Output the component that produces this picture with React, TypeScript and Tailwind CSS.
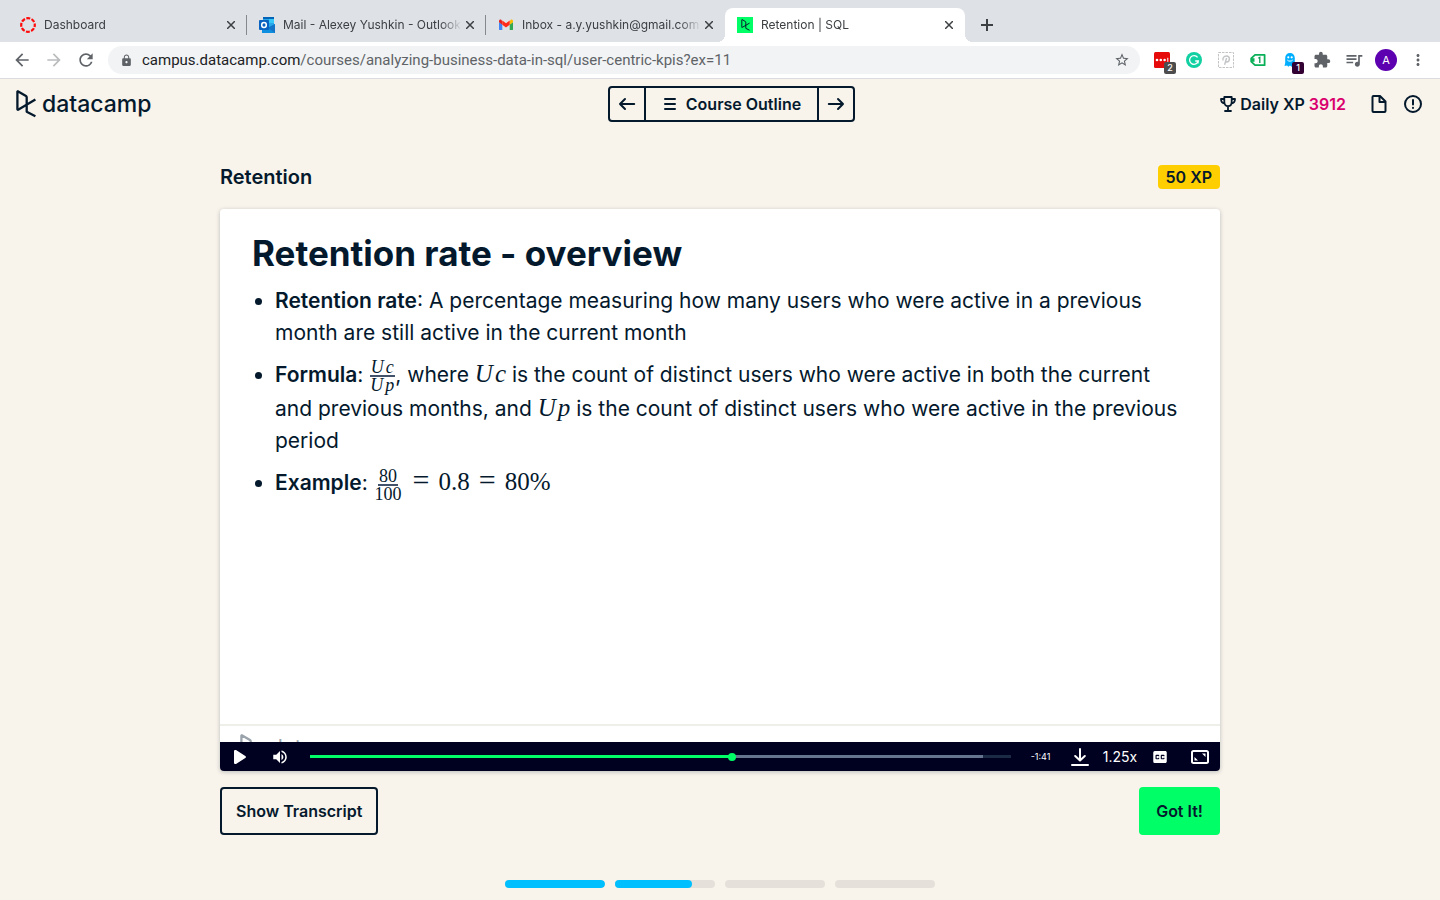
import type { ReactNode } from "react";
import {
  MdArrowBack,
  MdArrowForward,
  MdRefresh,
  MdLock,
  MdStarBorder,
  MdExtension,
  MdQueueMusic,
  MdMoreVert,
  MdVolumeUp,
  MdClosedCaption,
} from "react-icons/md";

function DatacampMark({ className }: { className?: string }) {
  return (
    <svg viewBox="0 0 20 28" className={className} fill="none" stroke="currentColor" strokeWidth="2.3" strokeLinejoin="round" aria-hidden="true">
      <path d="M19.4 26.2 10.700 21.8V7.2a1.4 1.4 0 0 0-.7-1.2L2.2 1.4a.5.5 0 0 0-.8.5v17.3a.5.5 0 0 0 .7.5L19.4 9.6" />
    </svg>
  );
}

function DashboardIcon() {
  return (
    <svg viewBox="0 0 16 16" className="size-4" fill="none" aria-hidden="true">
      <circle cx="8" cy="8" r="6.8" stroke="#ff0a0a" strokeWidth="2.2" strokeDasharray="3.94 1.4" strokeDashoffset="1.9" />
    </svg>
  );
}

function OutlookIcon() {
  return (
    <svg viewBox="0 0 16 16" className="size-4" aria-hidden="true">
      <path d="M4 0h11v11H4z" fill="#28a8ea" />
      <path d="M4 0h11v2H4z" fill="#0364b8" />
      <path d="M10 2h5v4h-5z" fill="#35c8f8" />
      <path d="M3 16V8l7 2 6-3v9z" fill="#0f8fe0" />
      <path d="m9 11 7-4v9z" fill="#1474c8" />
      <rect x="0" y="3" width="10" height="10" rx="1" fill="#0a63c0" />
      <ellipse cx="5" cy="8" rx="2.3" ry="2.5" fill="none" stroke="#fff" strokeWidth="1.5" />
    </svg>
  );
}

function GmailIcon() {
  return (
    <svg viewBox="0 0 16 16" className="size-4" aria-hidden="true">
      <path d="M1 5v7.2c0 .5.4.9.9.9h2.4V7.4z" fill="#4285f4" />
      <path d="M15 5v7.2c0 .5-.4.9-.9.9h-2.4V7.4z" fill="#34a853" />
      <path d="M11.7 4.2v3.6L15 5.3V4.1c0-1.3-1.4-2-2.4-1.2z" fill="#fbbc04" />
      <path d="M4.3 4.2v3.6L1 5.3V4.1c0-1.3 1.4-2 2.4-1.2z" fill="#e5221f" />
      <path d="M4.3 7.8V3.6L8 6.3l3.7-2.7v4.2L8 10.6z" fill="#ff2a1a" />
    </svg>
  );
}

function CampusIcon() {
  return (
    <span className="flex size-4 items-center justify-center bg-[#00ff66] text-[#05192d]">
      <DatacampMark className="h-3 w-[9px]" />
    </span>
  );
}

type TabProps = { icon: ReactNode; title: string; active?: boolean; divider?: boolean };

function BrowserTab({ icon, title, active, divider }: TabProps) {
  return (
    <li className={`relative flex h-full min-w-0 items-center pl-3 pr-2 ${active ? "w-60 rounded-t-lg bg-white" : "w-[239px]"}`}>
      {active && (
        <>
          <span className="absolute bottom-0 -left-2 size-2 bg-[radial-gradient(circle_at_0_0,transparent_8px,white_8px)]" />
          <span className="absolute bottom-0 -right-2 size-2 bg-[radial-gradient(circle_at_100%_0,transparent_8px,white_8px)]" />
        </>
      )}
      <span className="shrink-0">{icon}</span>
      <a href="#" className="ml-2 min-w-0 flex-1 overflow-hidden whitespace-nowrap text-[12px] text-[#3c4043] [mask-image:linear-gradient(to_right,black_88%,transparent)]">
        {title}
      </a>
      <button type="button" aria-label={`Close ${title}`} className="flex size-4 shrink-0 items-center justify-center text-[#3c4043]">
        <svg viewBox="0 0 8 8" className="size-2" stroke="currentColor" strokeWidth="1.5" aria-hidden="true">
          <path d="m0 0 8 8M8 0 0 8" />
        </svg>
      </button>
      {divider && <span className="absolute right-0 top-[7px] h-5 w-px bg-[#85888d]" />}
    </li>
  );
}

function TabStrip() {
  return (
    <nav aria-label="Tabs" className="flex h-[42px] items-stretch bg-[#dee1e6] pl-2 pt-2">
      <ul className="flex min-w-0 items-stretch">
        <BrowserTab icon={<DashboardIcon />} title="Dashboard" divider />
        <BrowserTab icon={<OutlookIcon />} title="Mail - Alexey Yushkin - Outlook" divider />
        <BrowserTab icon={<GmailIcon />} title="Inbox - a.y.yushkin@gmail.com" />
        <BrowserTab icon={<CampusIcon />} title="Retention | SQL" active />
      </ul>
      <button type="button" aria-label="New tab" className="ml-2 flex w-7 items-center justify-center text-[#3c4043]">
        <svg viewBox="0 0 12 12" className="size-3" stroke="currentColor" strokeWidth="2" aria-hidden="true">
          <path d="M6 0v12M0 6h12" />
        </svg>
      </button>
    </nav>
  );
}

function ToolButton({ label, children }: { label: string; children: ReactNode }) {
  return (
    <button type="button" aria-label={label} className="relative flex size-8 shrink-0 items-center justify-center text-[#5f6368]">
      {children}
    </button>
  );
}

function Toolbar() {
  return (
    <div className="flex h-[37px] items-center border-b border-[#dadce0] bg-white px-[6px]">
      <ToolButton label="Back"><MdArrowBack className="size-5" /></ToolButton>
      <ToolButton label="Forward"><MdArrowForward className="size-5 text-[#babcbe]" /></ToolButton>
      <ToolButton label="Reload"><MdRefresh className="size-5" /></ToolButton>
      <div className="ml-[6px] flex h-7 min-w-0 flex-1 items-center rounded-full bg-[#f1f3f4] pl-3 pr-[10px]">
        <MdLock className="size-[13px] shrink-0 text-[#5f6368]" />
        <a href="#" className="ml-[9px] flex-1 truncate font-[Roboto,sans-serif] text-[15px] text-[#5f6368]">
          <span className="text-[#202124]">campus.datacamp.com</span>/courses/analyzing-business-data-in-sql/user-centric-kpis?ex=11
        </a>
        <button type="button" aria-label="Bookmark" className="text-[#5f6368]"><MdStarBorder className="size-4" /></button>
      </div>
      <div className="ml-[6px] flex">
        <ToolButton label="Password manager">
          <svg viewBox="0 0 16 16" className="size-4" aria-hidden="true">
            <rect width="16" height="16" rx="1.5" fill="#e60a0a" />
            <circle cx="3" cy="8" r="1.3" fill="#fff" />
            <circle cx="6.8" cy="8" r="1.3" fill="#fff" />
            <circle cx="10.6" cy="8" r="1.3" fill="#fff" />
            <path d="M13.8 5.8v4" stroke="#fff" />
          </svg>
          <span className="absolute bottom-[2px] right-[2px] flex h-3 w-3 items-center justify-center rounded-xs bg-[#4d4d4d] text-[9px] font-medium text-white">2</span>
        </ToolButton>
        <ToolButton label="Writing assistant">
          <svg viewBox="0 0 16 16" className="size-4" fill="none" aria-hidden="true">
            <circle cx="8" cy="8" r="8" fill="#11d0a2" />
            <path d="M11.6 5.4A4.4 4.4 0 1 0 12.3 9H9.2M12.3 9l-.4 2.3" stroke="#fff" strokeWidth="1.3" />
          </svg>
        </ToolButton>
        <ToolButton label="Pinner">
          <svg viewBox="0 0 16 16" className="size-4" fill="none" stroke="#c2c4c6" aria-hidden="true">
            <rect x="0.5" y="0.5" width="15" height="15" strokeDasharray="2.5 1" />
            <path d="M5.2 8.600c-1.100-2.600.8-4.600 3.200-4.600 1.900 0 3 1.200 3 2.800 0 1.800-1.300 3.200-2.900 3.200-.7 0-1.100-.3-1.300-.8M8.600 6 6.600 12.800" strokeWidth="1.4" />
          </svg>
        </ToolButton>
        <ToolButton label="Price tags">
          <svg viewBox="0 0 16 16" className="size-4" fill="none" aria-hidden="true">
            <path d="M5 2.800h9.600v10.400H5L1.200 9.600V6.400z" stroke="#0ab058" strokeWidth="1.800" strokeLinejoin="round" />
            <path d="M1 6.200h3.500v3.600H1z" fill="#0ab058" />
            <path d="M8.300 6.200 9.800 5.300V11" stroke="#0a9850" strokeWidth="1.3" />
          </svg>
        </ToolButton>
        <ToolButton label="Tracker blocker">
          <svg viewBox="0 0 16 16" className="size-4" aria-hidden="true">
            <path d="M8 1c3 0 4.800 2 4.800 5v8.500L11 13.500l-1.500 1.300L8 13.500l-1.700 1.300-1.200-1.200-2.600.4L3.200 11V6c0-3 1.800-5 4.800-5z" fill="#00aeff" />
            <circle cx="6.3" cy="5.3" r="1.1" fill="#fff" />
            <circle cx="9.7" cy="5.3" r="1.1" fill="#fff" />
            <path d="M5.3 8c.6 1.500 4.800 1.500 5.400 0" stroke="#fff" fill="none" />
          </svg>
          <span className="absolute bottom-[2px] right-[2px] flex h-3 w-3 items-center justify-center rounded-xs bg-[#330033] text-[9px] font-medium text-white">1</span>
        </ToolButton>
        <ToolButton label="Extensions"><MdExtension className="size-[18px]" /></ToolButton>
        <ToolButton label="Media"><MdQueueMusic className="size-5" /></ToolButton>
        <ToolButton label="Profile">
          <span className="flex size-[22px] items-center justify-center rounded-full bg-[#5c00b0] text-[11px] text-white">A</span>
        </ToolButton>
        <ToolButton label="Menu"><MdMoreVert className="size-[18px]" /></ToolButton>
      </div>
    </div>
  );
}

function Arrow({ flip }: { flip?: boolean }) {
  return (
    <svg viewBox="0 0 18 14" className={`h-[14px] w-[18px] ${flip ? "rotate-180" : ""}`} fill="none" stroke="currentColor" strokeWidth="2" strokeLinecap="round" strokeLinejoin="round" aria-hidden="true">
      <path d="M16.200 7H2M7 2 2 7 7 12" />
    </svg>
  );
}

function CourseHeader() {
  return (
    <header className="grid h-[50px] grid-cols-[1fr_auto_1fr] items-center px-4">
      <a href="#" aria-label="datacamp" className="flex items-center gap-[6px] justify-self-start">
        <DatacampMark className="h-7 w-5" />
        <span className="text-[23px] font-medium leading-7">datacamp</span>
      </a>
      <div className="ml-[23px] flex h-9 divide-x-2 divide-[#05192d] rounded border-2 border-[#05192d]">
        <button type="button" aria-label="Previous exercise" className="flex w-9 items-center justify-center"><Arrow /></button>
        <button type="button" className="flex items-center gap-[10px] pl-[18px] pr-4 text-[16px] font-semibold">
          <svg viewBox="0 0 12 12" className="size-3" stroke="currentColor" strokeWidth="2" strokeLinecap="round" aria-hidden="true">
            <path d="M1 1h10M1 6h10M1 11h10" />
          </svg>
          Course Outline
        </button>
        <button type="button" aria-label="Next exercise" className="flex w-[34px] items-center justify-center"><Arrow flip /></button>
      </div>
      <div className="flex items-center justify-self-end">
        <svg viewBox="0 0 16 16" className="size-4" fill="none" stroke="currentColor" strokeWidth="1.800" strokeLinejoin="round" strokeLinecap="round" aria-hidden="true">
          <path d="M4.300 1h7.400v4.800c0 2.600-1.400 4.400-3.700 4.400S4.300 8.400 4.300 5.800zM4.300 3H1c0 2.600 1.300 4.200 3.600 4.500M11.700 3H15c0 2.600-1.300 4.200-3.600 4.500M8 10.200V15M5 15h6" />
        </svg>
        <p className="ml-1 text-[16px] font-semibold">Daily XP <span className="text-[#d9006e]">3912</span></p>
        <button type="button" aria-label="Slides" className="ml-6 flex size-[18px] items-center justify-center">
          <svg viewBox="0 0 18 18" className="size-[18px]" fill="none" stroke="currentColor" strokeWidth="2" strokeLinejoin="round" aria-hidden="true">
            <path d="M3.500 1H10l5.500 5.500V16a1 1 0 0 1-1 1h-11a1 1 0 0 1-1-1V2a1 1 0 0 1 1-1zM9.500 1v6h6" />
          </svg>
        </button>
        <button type="button" aria-label="Report issue" className="ml-4 mr-[2px] flex size-[18px] items-center justify-center">
          <svg viewBox="0 0 18 18" className="size-[18px]" fill="none" stroke="currentColor" strokeWidth="2" strokeLinecap="round" aria-hidden="true">
            <circle cx="9" cy="9" r="8" />
            <path d="M9 5v4.500M9 12.800v.2" />
          </svg>
        </button>
      </div>
    </header>
  );
}

function Fraction({ top, bottom }: { top: ReactNode; bottom: ReactNode }) {
  return (
    <span className="inline-flex flex-col items-center align-middle font-['Liberation_Serif',serif] text-[18px] leading-[16px]">
      <span className="flex gap-[2px] border-b-2 border-[#42526a] px-px">{top}</span>
      <span className="flex gap-[2px] px-px">{bottom}</span>
    </span>
  );
}

function MathVar({ children }: { children: ReactNode }) {
  return <span className="inline-flex gap-[2px] font-['Liberation_Serif',serif] text-[25px] leading-none">{children}</span>;
}

function Slide() {
  return (
    <article className="min-h-0 flex-1 overflow-hidden bg-white px-8 pt-5">
      <div className="h-[495px]">
        <h2 className="text-[35px] font-bold leading-[48px]">Retention rate - overview</h2>
        <ul className="mt-2 list-disc space-y-[10px] pl-[23px] pr-1 text-[21px] leading-8">
          <li>
            <strong className="font-semibold">Retention rate</strong>: A percentage measuring how many users who were active in a previous month are still active in the current month
          </li>
          <li>
            <strong className="font-semibold">Formula</strong>: <Fraction top={<><i>U</i><i>c</i></>} bottom={<><i>U</i><i>p</i></>} />, where{" "}
            <MathVar><i>U</i><i>c</i></MathVar> is the count of distinct users who were active in both the current and previous months, and{" "}
            <MathVar><i>U</i><i>p</i></MathVar> is the count of distinct users who were active in the previous period
          </li>
          <li>
            <strong className="font-semibold">Example</strong>: <Fraction top="80" bottom="100" />
            <span className="ml-[10px] inline-flex items-baseline gap-[9px] font-['Liberation_Serif',serif] text-[25px] leading-none">
              <span className="text-[30px] leading-[25px]">=</span>
              <span>0.8</span>
              <span className="text-[30px] leading-[25px]">=</span>
              <span>80%</span>
            </span>
          </li>
        </ul>
      </div>
      <footer className="-mx-8 border-t-2 border-[#efefea] px-5 pt-2 text-[#9aa3ab]">
        <span className="flex items-center gap-[10px]">
          <DatacampMark className="h-7 w-5" />
          <span className="text-[21px] leading-6">datacamp</span>
        </span>
      </footer>
    </article>
  );
}

function PlayerControls() {
  return (
    <div className="flex h-[29px] shrink-0 items-center bg-[#000020] text-white">
      <button type="button" aria-label="Play" className="flex w-10 items-center justify-center">
        <svg viewBox="0 0 14 16" className="h-4 w-[14px]" fill="currentColor" aria-hidden="true">
          <path d="M1 2.200C1 1 2.200.6 3 1.100l9.300 5.800c.9.600.9 1.600 0 2.200L3 14.900c-.8.500-2 .1-2-1.100z" />
        </svg>
      </button>
      <button type="button" aria-label="Mute" className="flex w-10 items-center justify-center"><MdVolumeUp className="size-[18px]" /></button>
      <input
        type="range"
        aria-label="Seek"
        min={0}
        max={1000}
        defaultValue={603}
        className="ml-[10px] h-[3px] min-w-0 flex-1 appearance-none bg-[linear-gradient(to_right,#00ff66_60.200%,#65758f_60.200%,#65758f_96%,#1b2a45_96%)] [&::-webkit-slider-thumb]:size-2 [&::-webkit-slider-thumb]:appearance-none [&::-webkit-slider-thumb]:rounded-full [&::-webkit-slider-thumb]:bg-[#00ff66]"
      />
      <span className="w-[59px] text-center text-[9px]">-1:41</span>
      <button type="button" aria-label="Download" className="flex w-5 items-center justify-center">
        <svg viewBox="0 0 20 20" className="size-5" fill="none" stroke="currentColor" strokeWidth="2" strokeLinecap="round" strokeLinejoin="round" aria-hidden="true">
          <path d="M10 2v11M5.200 9 10 13.500 14.800 9M2 18h16" />
        </svg>
      </button>
      <button type="button" aria-label="Playback speed" className="w-[60px] text-[14px]">1.25x</button>
      <button type="button" aria-label="Captions" className="flex w-5 items-center justify-center"><MdClosedCaption className="size-[18px]" /></button>
      <button type="button" aria-label="Fullscreen" className="ml-5 mr-[10px] flex w-5 items-center justify-center">
        <svg viewBox="0 0 20 16" className="h-4 w-5" fill="none" aria-hidden="true">
          <rect x="2" y="2" width="16" height="12" rx="1.500" stroke="currentColor" strokeWidth="2" />
          <path d="M12 4.500h3.500v3.500zM4.500 8v3.500H8z" fill="currentColor" />
        </svg>
      </button>
    </div>
  );
}

const lessonProgress = [100, 77, 0, 0];

export default function App() {
  return (
    <div className="flex min-h-screen flex-col bg-[#f8f3eb] font-[Inter,sans-serif] text-[#05192d]">
      <TabStrip />
      <Toolbar />
      <CourseHeader />
      <main className="mx-auto w-full max-w-[1000px] pt-9">
        <div className="flex h-6 items-center justify-between">
          <h1 className="text-[20px] font-semibold">Retention</h1>
          <span className="flex h-6 items-center rounded bg-[#ffce00] px-2 text-[16px] font-semibold">50 XP</span>
        </div>
        <section aria-label="Video" className="mt-5 flex aspect-[500/281] flex-col overflow-hidden rounded shadow-[0_1px_4px_rgba(5,25,45,0.25)]">
          <Slide />
          <PlayerControls />
        </section>
        <div className="mt-4 flex justify-between">
          <button type="button" className="h-12 rounded border-2 border-[#05192d] px-[14px] text-[16px] font-semibold">Show Transcript</button>
          <button type="button" className="h-12 rounded bg-[#00ff66] px-[17px] text-[16px] font-semibold">Got It!</button>
        </div>
      </main>
      <div className="mt-auto flex justify-center gap-[10px] pb-3" aria-label="Lesson progress">
        {lessonProgress.map((value, i) => (
          <div key={i} className="h-2 w-[100px] overflow-hidden rounded-full bg-[#e5e1da]">
            <div className="h-full rounded-r-full bg-[#00bfff]" style={{ width: `${value}%` }} />
          </div>
        ))}
      </div>
    </div>
  );
}
